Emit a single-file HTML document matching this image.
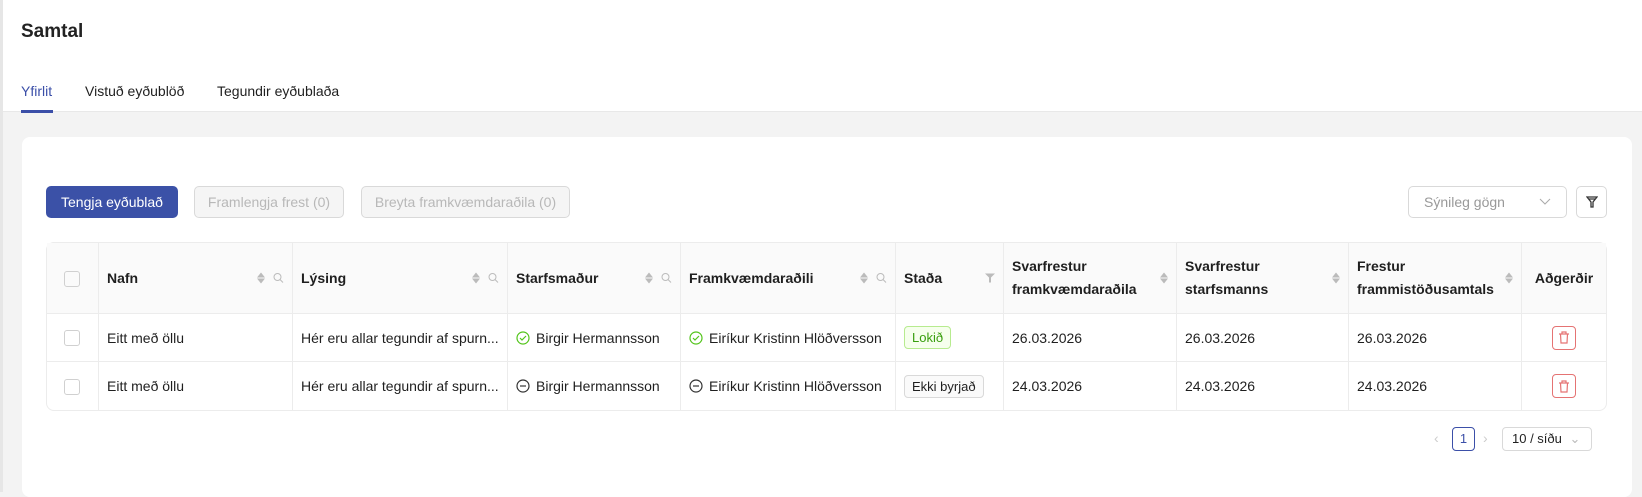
<!DOCTYPE html>
<html><head><meta charset="utf-8"><style>
*{box-sizing:border-box;margin:0;padding:0}
body{width:1642px;height:492px;overflow:hidden;background:#f3f3f3;font-family:"Liberation Sans",sans-serif;font-size:14px;color:#1f1f1f;position:relative}
.top{position:absolute;left:0;top:0;width:1642px;height:112px;background:#fff;border-bottom:1px solid #e8e8e8}
.abs{position:absolute}
h1{position:absolute;left:21px;top:21px;font-size:19px;font-weight:bold;color:#222}
.tab{position:absolute;top:83px;font-size:14px}
.card{position:absolute;left:22px;top:137px;width:1610px;height:360px;background:#fff;border-radius:8px}
.btn{position:absolute;top:186px;height:32px;border-radius:5px;font-size:14px;display:flex;align-items:center;justify-content:center}
.dis{border:1px solid #d9d9d9;background:#f5f5f5;color:#b8b8b8}
table{position:absolute;left:46px;top:242px;border-collapse:separate;border-spacing:0;border:1px solid #ececec;border-radius:8px;width:1561px;table-layout:fixed}
td,th{border-right:1px solid #ececec;border-bottom:1px solid #ececec;padding:0 8px;text-align:left;vertical-align:middle;position:relative;white-space:nowrap;overflow:hidden}
th{background:#fafafa;height:71px;font-weight:bold;font-size:14px;line-height:23px}
td{height:48px;font-size:14px}
tr:last-child td{border-bottom:none}
td:last-child,th:last-child{border-right:none}
.cb{width:16px;height:16px;border:1px solid #d0d0d0;border-radius:3px;display:inline-block;margin-left:17px;vertical-align:middle}
.ic{position:absolute;right:8px;top:50%;transform:translateY(-50%);display:flex;gap:8px;align-items:center}
.sort{display:flex;flex-direction:column;gap:1px}
.sort i{width:0;height:0;border-left:4px solid transparent;border-right:4px solid transparent}
.up{border-bottom:5px solid #bbb}.dn{border-top:5px solid #bbb}
.tag{display:inline-block;padding:2px 7px;border-radius:4px;font-size:13px;line-height:17px}
.del{width:24px;height:24px;border:1px solid #e57373;border-radius:4px;margin:0 auto;display:flex;align-items:center;justify-content:center}
</style></head><body>
<div class="top"></div>
<div class="abs" style="left:0;top:0;width:3px;height:492px;background:#e6e6e6"></div>
<h1>Samtal</h1>
<div class="tab" style="left:21px;color:#3b4fa8">Yfirlit</div>
<div class="abs" style="left:21px;top:110px;width:32px;height:3px;background:#3b4fa8"></div>
<div class="tab" style="left:85px">Vistuð eyðublöð</div>
<div class="tab" style="left:217px">Tegundir eyðublaða</div>
<div class="card"></div>
<div class="btn" style="left:46px;width:132px;background:#3b51a7;color:#fff">Tengja eyðublað</div>
<div class="btn dis" style="left:194px;width:150px">Framlengja frest (0)</div>
<div class="btn dis" style="left:361px;width:209px">Breyta framkvæmdaraðila (0)</div>
<div class="btn" style="left:1408px;width:159px;border:1px solid #d9d9d9;color:#999;justify-content:space-between;padding:0 15px">Sýnileg gögn<svg width="12" height="8"><path d="M1 1l5 5 5-5" stroke="#aaa" fill="none"/></svg></div>
<div class="btn" style="left:1576px;width:31px;border:1px solid #d9d9d9"><svg width="12" height="12" viewBox="0 0 12 12"><path d="M1 1h10L7 6v5H5V6z M3 3h6" stroke="#333" fill="none" stroke-width="1.3"/></svg></div>
<table>
<colgroup><col style="width:52px"><col style="width:194px"><col style="width:215px"><col style="width:173px"><col style="width:215px"><col style="width:108px"><col style="width:173px"><col style="width:172px"><col style="width:173px"><col></colgroup>
<tr><th style="padding:0"><span class="cb"></span></th>
<th>Nafn<span class="ic"><span class="sort"><i class="up"></i><i class="dn"></i></span><svg width="11" height="11"><circle cx="4.5" cy="4.5" r="3.5" stroke="#bbb" fill="none"/><path d="M7 7l3 3" stroke="#bbb"/></svg></span></th>
<th>Lýsing<span class="ic"><span class="sort"><i class="up"></i><i class="dn"></i></span><svg width="11" height="11"><circle cx="4.5" cy="4.5" r="3.5" stroke="#bbb" fill="none"/><path d="M7 7l3 3" stroke="#bbb"/></svg></span></th>
<th>Starfsmaður<span class="ic"><span class="sort"><i class="up"></i><i class="dn"></i></span><svg width="11" height="11"><circle cx="4.5" cy="4.5" r="3.5" stroke="#bbb" fill="none"/><path d="M7 7l3 3" stroke="#bbb"/></svg></span></th>
<th>Framkvæmdaraðili<span class="ic"><span class="sort"><i class="up"></i><i class="dn"></i></span><svg width="11" height="11"><circle cx="4.5" cy="4.5" r="3.5" stroke="#bbb" fill="none"/><path d="M7 7l3 3" stroke="#bbb"/></svg></span></th>
<th>Staða<span class="ic"><svg width="10" height="11"><path d="M0 1h10L6 5v5H4V5z" fill="#bbb"/></svg></span></th>
<th>Svarfrestur<br>framkvæmdaraðila<span class="ic"><span class="sort"><i class="up"></i><i class="dn"></i></span></span></th>
<th>Svarfrestur<br>starfsmanns<span class="ic"><span class="sort"><i class="up"></i><i class="dn"></i></span></span></th>
<th>Frestur<br>frammistöðusamtals<span class="ic"><span class="sort"><i class="up"></i><i class="dn"></i></span></span></th>
<th style="text-align:center">Aðgerðir</th></tr>
<tr><td style="padding:0"><span class="cb"></span></td><td>Eitt með öllu</td><td style="text-overflow:ellipsis">Hér eru allar tegundir af spurn...</td>
<td><svg width="14" height="14" style="vertical-align:-2px;margin-right:6px"><circle cx="7" cy="7" r="6" stroke="#52c41a" fill="none" stroke-width="1.2"/><path d="M4 7l2 2 4-4" stroke="#52c41a" fill="none" stroke-width="1.2"/></svg>Birgir Hermannsson</td>
<td><svg width="14" height="14" style="vertical-align:-2px;margin-right:6px"><circle cx="7" cy="7" r="6" stroke="#52c41a" fill="none" stroke-width="1.2"/><path d="M4 7l2 2 4-4" stroke="#52c41a" fill="none" stroke-width="1.2"/></svg>Eiríkur Kristinn Hlöðversson</td>
<td><span class="tag" style="background:#f6ffed;border:1px solid #b7eb8f;color:#389e0d">Lokið</span></td>
<td>26.03.2026</td><td>26.03.2026</td><td>26.03.2026</td>
<td><div class="del"><svg width="12" height="13"><path d="M1 3h10M4 3V1h4v2M2.5 3l.5 9h6l.5-9" stroke="#e57373" fill="none" stroke-width="1.2"/></svg></div></td></tr>
<tr><td style="padding:0"><span class="cb"></span></td><td>Eitt með öllu</td><td>Hér eru allar tegundir af spurn...</td>
<td><svg width="14" height="14" style="vertical-align:-2px;margin-right:6px"><circle cx="7" cy="7" r="6" stroke="#333" fill="none" stroke-width="1.2"/><path d="M4 7h6" stroke="#333" stroke-width="1.2"/></svg>Birgir Hermannsson</td>
<td><svg width="14" height="14" style="vertical-align:-2px;margin-right:6px"><circle cx="7" cy="7" r="6" stroke="#333" fill="none" stroke-width="1.2"/><path d="M4 7h6" stroke="#333" stroke-width="1.2"/></svg>Eiríkur Kristinn Hlöðversson</td>
<td><span class="tag" style="background:#fafafa;border:1px solid #d9d9d9">Ekki byrjað</span></td>
<td>24.03.2026</td><td>24.03.2026</td><td>24.03.2026</td>
<td><div class="del"><svg width="12" height="13"><path d="M1 3h10M4 3V1h4v2M2.5 3l.5 9h6l.5-9" stroke="#e57373" fill="none" stroke-width="1.2"/></svg></div></td></tr>
</table>
<div class="abs" style="left:1434px;top:430px;color:#ccc">&lsaquo;</div>
<div class="abs" style="left:1452px;top:427px;width:23px;height:24px;border:1px solid #3b4fa8;border-radius:4px;color:#3b4fa8;text-align:center;line-height:22px;font-size:13px">1</div>
<div class="abs" style="left:1483px;top:430px;color:#ccc">&rsaquo;</div>
<div class="abs" style="left:1502px;top:427px;width:90px;height:24px;border:1px solid #d9d9d9;border-radius:4px;padding-left:9px;line-height:22px;font-size:13px">10 / síðu <span style="color:#bbb;margin-left:4px">&#8964;</span></div>
</body></html>
